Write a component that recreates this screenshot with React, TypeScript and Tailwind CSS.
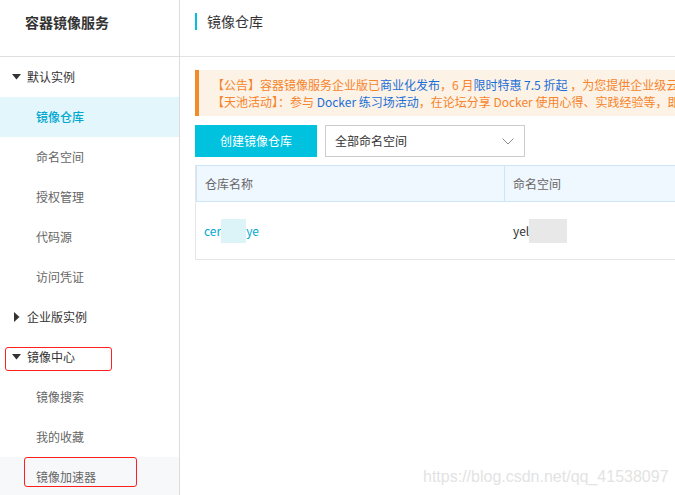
import { useState } from "react";

const font = { fontFamily: '"Noto Sans CJK SC", "Noto Sans", "Liberation Sans", sans-serif' };

type NavItem = { label: string; level: 0 | 1; caret?: "down" | "right"; active?: boolean; hover?: boolean };

const nav: NavItem[] = [
  { label: "默认实例", level: 0, caret: "down" },
  { label: "镜像仓库", level: 1, active: true },
  { label: "命名空间", level: 1 },
  { label: "授权管理", level: 1 },
  { label: "代码源", level: 1 },
  { label: "访问凭证", level: 1 },
  { label: "企业版实例", level: 0, caret: "right" },
  { label: "镜像中心", level: 0, caret: "down" },
  { label: "镜像搜索", level: 1 },
  { label: "我的收藏", level: 1 },
  { label: "镜像加速器", level: 1, hover: true },
];

function Caret({ dir }: { dir: "down" | "right" }) {
  return dir === "down" ? (
    <svg width="9" height="6" viewBox="0 0 9 6" className="mr-[6px]">
      <polygon points="0,0 9,0 4.5,5.5" fill="#333" />
    </svg>
  ) : (
    <svg width="6" height="10" viewBox="0 0 6 10" className="ml-[2px] mr-[7px]">
      <polygon points="0,0 5.5,5 0,10" fill="#333" />
    </svg>
  );
}

function Sidebar() {
  return (
    <aside className="relative w-[180px] shrink-0 border-r border-[#dcdcdc] bg-white">
      <div className="h-[57px] border-b border-[#dedede] pl-[25px] pt-[12px] text-[14px] font-bold text-[#333]">
        容器镜像服务
      </div>
      <ul>
        {nav.map((item) => (
          <li
            key={item.label}
            className={`flex h-[40px] items-center text-[12px] ${
              item.active ? "bg-[#e3f6fb] text-[#00a8d0]" : item.hover ? "bg-[#f7f8fa] text-[#666]" : item.level === 0 ? "text-[#333]" : "text-[#666]"
            } ${item.level === 0 ? "pl-[12px]" : "pl-[36px]"}`}
          >
            {item.caret ? <Caret dir={item.caret} /> : null}
            <span className={item.active ? "font-medium" : ""}>{item.label}</span>
          </li>
        ))}
      </ul>
      {/* annotation boxes */}
      <div className="pointer-events-none absolute left-[5px] top-[347px] h-[24px] w-[107px] rounded-[3px] border border-[#ff1f1f]" />
      <div className="pointer-events-none absolute left-[24px] top-[457px] h-[30px] w-[113px] rounded-[3px] border border-[#ff1f1f]" />
    </aside>
  );
}

function Notice() {
  const blue = "text-[#1a6fd6]";
  return (
    <div className="w-[720px] overflow-hidden whitespace-nowrap border-l-[4px] border-[#f08c2c] bg-[#fdf2e6] py-[6px] pl-[13px] text-[12px] leading-[17px] text-[#f5842c]">
      <p>
        【公告】容器镜像服务企业版已<span className={blue}>商业化发布</span>，6 月<span className={blue}>限时特惠 7.5 折起</span> ，为您提供企业级云原生镜像服务
      </p>
      <p>
        【天池活动】：参与 <span className={blue}>Docker 练习场活动</span>，在论坛分享 Docker 使用心得、实践经验等，即可获得奖励
      </p>
    </div>
  );
}

function Toolbar() {
  const [ns] = useState("全部命名空间");
  return (
    <div className="mt-[9px] flex gap-[8px]">
      <button className="h-[32px] w-[122px] bg-[#00c1de] text-[12px] text-white">创建镜像仓库</button>
      <div className="flex h-[32px] w-[200px] items-center justify-between border border-[#cccccc] bg-white pl-[9px] pr-[10px] text-[12px] text-[#333]">
        <span>{ns}</span>
        <svg width="12" height="7" viewBox="0 0 12 7">
          <polyline points="0.5,0.5 6,6 11.5,0.5" fill="none" stroke="#8a8a8a" strokeWidth="1" />
        </svg>
      </div>
    </div>
  );
}

function Table() {
  return (
    <div className="mt-[8px] w-[720px] border-x border-b border-[#e6e6e6] text-[12px]">
      <div className="flex h-[37px] items-center border border-[#cfe4f7] bg-[#eff7ff] text-[#666]">
        <div className="flex h-full w-[308px] items-center border-r border-[#cfe4f7] pl-[8px]">仓库名称</div>
        <div className="pl-[8px]">命名空间</div>
      </div>
      <div className="flex h-[57px] items-center">
        <div className="flex w-[309px] items-center pl-[8px] text-[#00a8d0]">
          <span>cer</span>
          <span className="inline-block h-[24px] w-[25px] bg-[#dcf3f8]" />
          <span>ye</span>
        </div>
        <div className="flex items-center pl-[8px] text-[#333]">
          <span>yel</span>
          <span className="inline-block h-[24px] w-[38px] bg-[#e8e8e8]" />
        </div>
      </div>
    </div>
  );
}

export default function App() {
  return (
    <div className="relative flex h-[495px] w-[675px] overflow-hidden bg-white" style={font}>
      <Sidebar />
      <main className="min-w-0 flex-1 overflow-hidden">
        <header className="flex h-[57px] items-start border-b border-[#e3e3e3] pl-[15px] pt-[13px]">
          <span className="mr-[10px] h-[17px] w-[2px] bg-[#00c1de]" />
          <h1 className="text-[14px] leading-[17px] text-[#333]">镜像仓库</h1>
        </header>
        <div className="pl-[15px] pt-[13px]">
          <Notice />
          <Toolbar />
          <Table />
        </div>
      </main>
      <div
        className="pointer-events-none absolute left-[423px] top-[465px] text-[16px] text-[#e3e3e3]"
        style={{ fontFamily: '"Liberation Sans", Arial, sans-serif' }}
      >
        https://blog.csdn.net/qq_41538097
      </div>
    </div>
  );
}
